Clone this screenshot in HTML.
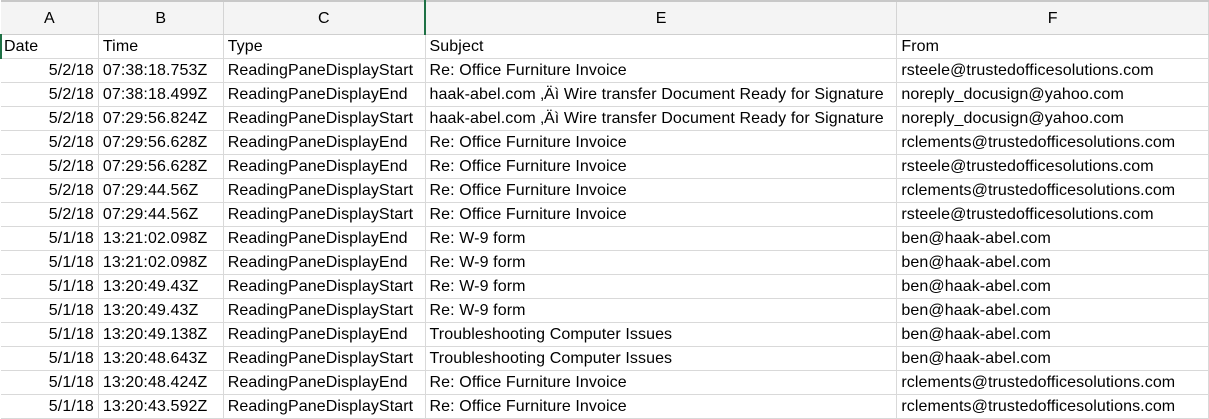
<!DOCTYPE html>
<html><head><style>
body{margin:0;width:1209px;height:419px;overflow:hidden;background:#fff;font-family:"Liberation Sans",Arial,sans-serif;}
table{border-collapse:collapse;table-layout:fixed;position:absolute;top:0;left:0;}
td{height:23px;border-right:1px solid #d9d9d9;border-bottom:1px solid #d9d9d9;padding:0 0 0 4px;font-size:16px;letter-spacing:0.1px;color:#000;white-space:nowrap;overflow:hidden;line-height:23px;}
tr.h td{height:32px;background:#f4f4f4;text-align:center;font-size:16px;border-right:1px solid #d4d4d4;border-bottom:1px solid #cfcfcf;padding:0;border-top:2px solid #c8c8c8;}
td.r{text-align:right;padding:0 4px 0 0;}
</style></head><body>
<table>
<colgroup><col style="width:98px"><col style="width:125px"><col style="width:202px"><col style="width:472px"><col style="width:312px"></colgroup>
<tr class="h"><td>A</td><td>B</td><td style="border-right:2px solid #1e7145">C</td><td>E</td><td>F</td></tr>
<tr><td style="border-left:2px solid #1e7145;padding-left:2px">Date</td><td>Time</td><td>Type</td><td>Subject</td><td>From</td></tr>
<tr><td class="r">5/2/18</td><td>07:38:18.753Z</td><td>ReadingPaneDisplayStart</td><td>Re: Office Furniture Invoice</td><td>rsteele@trustedofficesolutions.com</td></tr>
<tr><td class="r">5/2/18</td><td>07:38:18.499Z</td><td>ReadingPaneDisplayEnd</td><td>haak-abel.com ‚Äì Wire transfer Document Ready for Signature</td><td>noreply_docusign@yahoo.com</td></tr>
<tr><td class="r">5/2/18</td><td>07:29:56.824Z</td><td>ReadingPaneDisplayStart</td><td>haak-abel.com ‚Äì Wire transfer Document Ready for Signature</td><td>noreply_docusign@yahoo.com</td></tr>
<tr><td class="r">5/2/18</td><td>07:29:56.628Z</td><td>ReadingPaneDisplayEnd</td><td>Re: Office Furniture Invoice</td><td>rclements@trustedofficesolutions.com</td></tr>
<tr><td class="r">5/2/18</td><td>07:29:56.628Z</td><td>ReadingPaneDisplayEnd</td><td>Re: Office Furniture Invoice</td><td>rsteele@trustedofficesolutions.com</td></tr>
<tr><td class="r">5/2/18</td><td>07:29:44.56Z</td><td>ReadingPaneDisplayStart</td><td>Re: Office Furniture Invoice</td><td>rclements@trustedofficesolutions.com</td></tr>
<tr><td class="r">5/2/18</td><td>07:29:44.56Z</td><td>ReadingPaneDisplayStart</td><td>Re: Office Furniture Invoice</td><td>rsteele@trustedofficesolutions.com</td></tr>
<tr><td class="r">5/1/18</td><td>13:21:02.098Z</td><td>ReadingPaneDisplayEnd</td><td>Re: W-9 form</td><td>ben@haak-abel.com</td></tr>
<tr><td class="r">5/1/18</td><td>13:21:02.098Z</td><td>ReadingPaneDisplayEnd</td><td>Re: W-9 form</td><td>ben@haak-abel.com</td></tr>
<tr><td class="r">5/1/18</td><td>13:20:49.43Z</td><td>ReadingPaneDisplayStart</td><td>Re: W-9 form</td><td>ben@haak-abel.com</td></tr>
<tr><td class="r">5/1/18</td><td>13:20:49.43Z</td><td>ReadingPaneDisplayStart</td><td>Re: W-9 form</td><td>ben@haak-abel.com</td></tr>
<tr><td class="r">5/1/18</td><td>13:20:49.138Z</td><td>ReadingPaneDisplayEnd</td><td>Troubleshooting Computer Issues</td><td>ben@haak-abel.com</td></tr>
<tr><td class="r">5/1/18</td><td>13:20:48.643Z</td><td>ReadingPaneDisplayStart</td><td>Troubleshooting Computer Issues</td><td>ben@haak-abel.com</td></tr>
<tr><td class="r">5/1/18</td><td>13:20:48.424Z</td><td>ReadingPaneDisplayEnd</td><td>Re: Office Furniture Invoice</td><td>rclements@trustedofficesolutions.com</td></tr>
<tr><td class="r">5/1/18</td><td>13:20:43.592Z</td><td>ReadingPaneDisplayStart</td><td>Re: Office Furniture Invoice</td><td>rclements@trustedofficesolutions.com</td></tr>
</table>
</body></html>
